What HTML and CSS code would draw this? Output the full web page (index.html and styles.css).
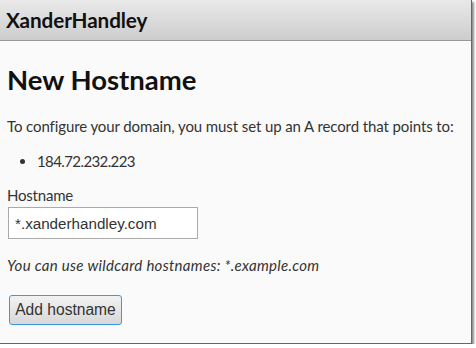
FILE: index.html
```html
<!DOCTYPE html>
<html>
<head>
<meta charset="utf-8">
<link rel="stylesheet" href="styles.css">
</head>
<body>
<div class="frame">
  <header class="topbar"><span class="brand">XanderHandley</span></header>
  <main class="content">
    <h1 class="title">New Hostname</h1>
    <p class="intro">To configure your domain, you must set up an A record that points to:</p>
    <ul class="ips"><li>184.72.232.223</li></ul>
    <label class="label" for="host">Hostname</label>
    <input class="field" id="host" type="text" value="*.xanderhandley.com">
    <p class="hint">You can use wildcard hostnames: *.example.com</p>
    <button class="btn" type="button">Add hostname</button>
  </main>
</div>
</body>
</html>
```
FILE: styles.css
```css
html, body { margin: 0; padding: 0; background: #fff; }
.frame {
  width: 471px;
  height: 343px;
  background: #fafafa;
  border-right: 1px solid #666;
  border-bottom: 1px solid #666;
  box-shadow: 2px 2px 2px rgba(0,0,0,0.45);
  font-family: Lato, "Open Sans", sans-serif;
  color: #333;
  overflow: hidden;
}
.topbar {
  height: 41px;
  background: linear-gradient(#e9e9e9, #cdcdcd);
  border-bottom: 1px solid #999;
  box-sizing: border-box;
  display: flex;
  align-items: center;
  padding-left: 6px;
}
.brand { font-weight: bold; font-size: 20.7px; color: #111; letter-spacing: -0.1px; }
.content { padding: 0 7px; }
.title { margin: 22px 0 0; font-size: 27.5px; font-weight: bold; color: #111; line-height: 34px; }
.intro { margin: 20px 0 0; font-size: 15px; line-height: 18px; letter-spacing: -0.1px; }
.ips { margin: 17px 0 0; padding-left: 30px; font-size: 15px; line-height: 18px; letter-spacing: -0.6px; }
.label { display: block; margin-top: 16px; font-size: 15px; line-height: 18px; letter-spacing: -0.2px; }
.field {
  display: block;
  margin: 3px 0 0 1px;
  width: 190px; height: 32px; box-sizing: border-box;
  border: 1px solid #aaa;
  background: #fff;
  font-family: "Liberation Sans", Arial, sans-serif;
  font-size: 15.2px;
  padding: 0 6px;
  color: #333;
}
.hint { margin: 17px 0 0; font-style: italic; font-size: 15px; line-height: 18px; letter-spacing: 0.3px; }
.btn {
  margin: 21px 0 0 2px;
  width: 113px; height: 30px;
  border: 1px solid #3c9ad8;
  border-radius: 3px;
  background: linear-gradient(#f2f2f2, #d8d8d8);
  font-family: "Liberation Sans", Arial, sans-serif;
  font-size: 15.6px;
  color: #333;
  padding: 0;
}
```
